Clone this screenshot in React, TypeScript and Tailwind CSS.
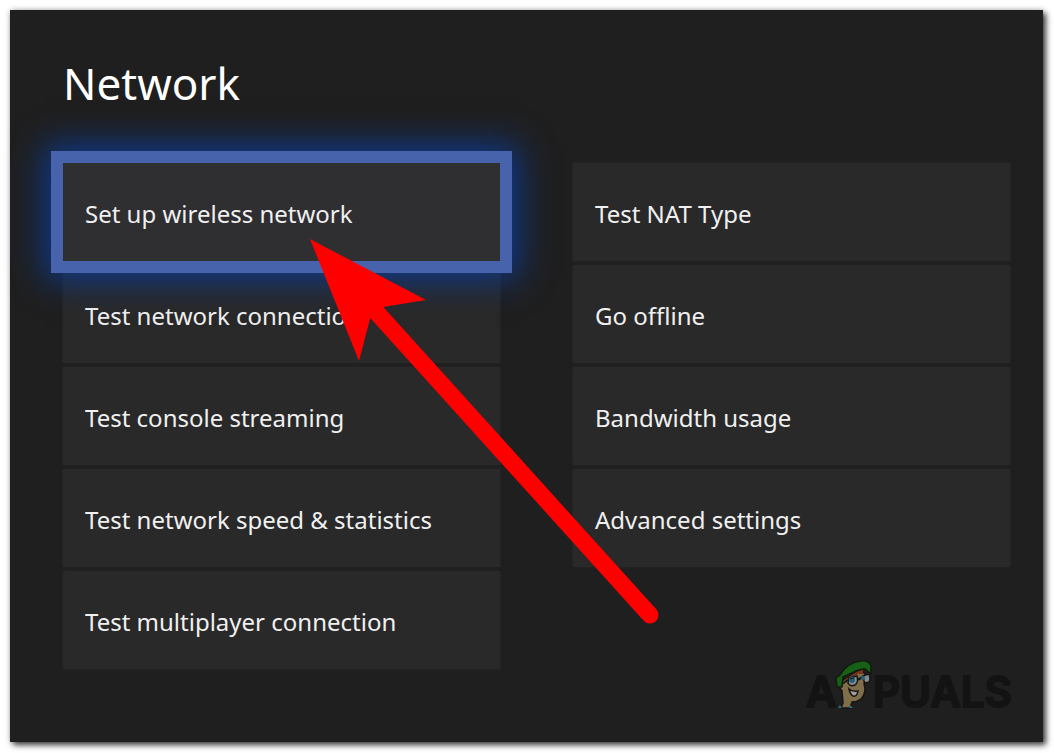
import clsx from "clsx";

const leftItems = [
  "Set up wireless network",
  "Test network connection",
  "Test console streaming",
  "Test network speed & statistics",
  "Test multiplayer connection",
];

const rightItems = [
  "Test NAT Type",
  "Go offline",
  "Bandwidth usage",
  "Advanced settings",
];

function MenuItem({ label, selected = false }: { label: string; selected?: boolean }) {
  return (
    <button
      type="button"
      className={clsx(
        "flex h-[98px] w-full items-center px-[22px] pt-1 text-left text-[24px] leading-8 whitespace-nowrap text-[#f0f0f0]",
        selected
          ? "relative z-10 bg-[#2f2e30] outline-[12px] outline-[#4663ab] outline-solid shadow-[0_0_32px_18px_#0d3a90]"
          : "bg-[#292929] shadow-[0_0_3px_#292929]"
      )}
    >
      {label}
    </button>
  );
}

function Arrow() {
  return (
    <svg
      viewBox="0 0 360 400"
      className="pointer-events-none absolute top-[229px] left-[300px] z-20 h-[400px] w-[360px]"
      aria-hidden="true"
    >
      <path d="M0 0L116 61L73 68L60 80L49 122Z" fill="#ff0000" />
      <path d="M60 66L340 376" stroke="#ff0000" strokeWidth="17" strokeLinecap="round" />
    </svg>
  );
}

function Mascot() {
  return (
    <g transform="translate(29 10)">
      {/* neck and face */}
      <path
        d="M4 22L27 11L30 14V20L29 24L30 28Q30 35 26 39Q22 42 17 42L15 48H6L8 43L7 31L4 27Z"
        fill="#806d49"
        stroke="#141414"
        strokeWidth="1.5"
        strokeLinejoin="round"
      />
      {/* hair */}
      <path d="M9 20L20 13L28 9V14L22 14L18 18L11 21Z" fill="#7c3518" />
      {/* beret */}
      <path
        d="M1 18L5 15Q13 2 26 1Q34 0 36 6L36 14L30 9Q24 9 17 13L8 17L7 27L2 27Z"
        fill="#176016"
        stroke="#101a10"
        strokeWidth="1.5"
        strokeLinejoin="round"
      />
      {/* glasses */}
      <path d="M7 24L13 20" stroke="#171717" strokeWidth="2" />
      <path d="M14 18L22 16Q24 22 20 25Q15 27 13 23Z" fill="#858b91" stroke="#171717" strokeWidth="1.5" />
      <path d="M28 16L34 14Q36 19 34 22Q30 24 29 21Z" fill="#858b91" stroke="#171717" strokeWidth="1.5" />
      <path d="M22 20L28 17" stroke="#171717" strokeWidth="2" />
      <circle cx="17" cy="20" r="3" fill="#28617a" />
      <circle cx="28" cy="18" r="2" fill="#28617a" />
      <path d="M15 19L19 18" stroke="#111111" strokeWidth="1" />
      {/* mouth */}
      <path d="M14 29Q17 32 23 31Q22 37 18 36Q15 34 14 29Z" fill="#a4a19b" stroke="#171717" strokeWidth="1.5" />
      {/* collar */}
      <path d="M3 48L5 45L7 48ZM14 48L15 45L18 48Z" fill="#236f83" />
    </g>
  );
}

function Watermark() {
  return (
    <svg
      viewBox="0 0 220 76"
      className="absolute right-[17px] bottom-4 h-[76px] w-[220px] font-['Inter',sans-serif] text-[42px] font-semibold"
      role="img"
      aria-label="Appuals"
    >
      <g fill="#131313" stroke="#131313" strokeWidth="2" strokeLinejoin="round">
        <text x="0" y="57">A</text>
        <text x="67" y="57">PUALS</text>
      </g>
      <Mascot />
    </svg>
  );
}

export default function App() {
  return (
    <div className="min-h-screen bg-white p-[10px] pr-[11px] pb-[11px] font-['Noto_Sans',sans-serif]">
      <main className="relative bg-[#1f1f1f] pt-[43px] pr-[33px] pb-[73px] pl-[53px] shadow-[3px_3px_6px_rgba(0,0,0,0.75),0_0_6px_rgba(0,0,0,0.2)]">
        <h1 className="mb-[50px] text-[44px] leading-[60px] text-white">Network</h1>

        <div className="grid grid-cols-2 gap-x-[73px]">
          <nav className="flex flex-col gap-1" aria-label="Connection">
            {leftItems.map((label, i) => (
              <MenuItem key={label} label={label} selected={i === 0} />
            ))}
          </nav>
          <nav className="flex flex-col gap-1" aria-label="Options">
            {rightItems.map((label) => (
              <MenuItem key={label} label={label} />
            ))}
          </nav>
        </div>

        <Arrow />
        <Watermark />
      </main>
    </div>
  );
}
